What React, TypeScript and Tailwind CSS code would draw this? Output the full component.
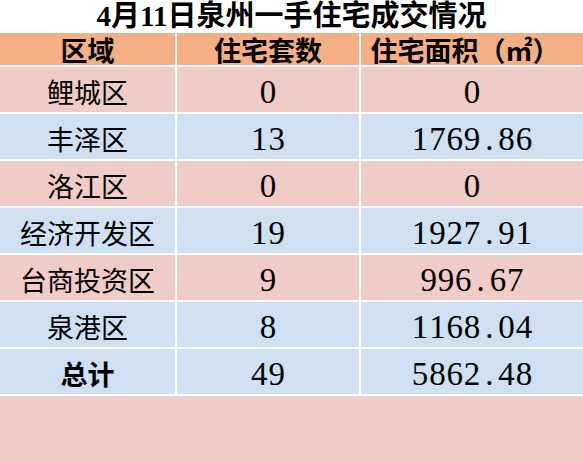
import React from 'react'

const rows = [
  { name: '鲤城区', count: '0', area: '0', bg: 'bg-[#f0ccc8]' },
  { name: '丰泽区', count: '13', area: '1769.86', bg: 'bg-[#cee0f2]' },
  { name: '洛江区', count: '0', area: '0', bg: 'bg-[#f0ccc8]' },
  { name: '经济开发区', count: '19', area: '1927.91', bg: 'bg-[#cee0f2]' },
  { name: '台商投资区', count: '9', area: '996.67', bg: 'bg-[#f0ccc8]' },
  { name: '泉港区', count: '8', area: '1168.04', bg: 'bg-[#cee0f2]' },
  { name: '总计', count: '49', area: '5862.48', bg: 'bg-[#cee0f2]', bold: true },
]

// digits drawn in fixed cells, like the half-width glyphs of the sheet
const Num = ({ v }: { v: string }) => (
  <span className="inline-flex">
    {v.split('').map((c, i) => (
      <span key={i} className="w-[17.3px] text-center">
        {c}
      </span>
    ))}
  </span>
)

const App = () => {
  return (
    <div className="w-[583px] h-[462px] bg-white overflow-hidden text-black font-[family-name:'Liberation_Serif','Noto_Sans_CJK_SC',serif]">
      <div className="h-[33px] flex items-center justify-center text-[29px] font-bold leading-none">
        4月11日泉州一手住宅成交情况
      </div>
      <div className="grid grid-cols-[175px_182px_1fr] gap-[2px] bg-white font-[family-name:'Noto_Sans_CJK_SC',sans-serif]">
        <div className="h-[32px] bg-[#f4b083] flex items-center justify-center text-[27px] font-bold leading-none">
          区域
        </div>
        <div className="h-[32px] bg-[#f4b083] flex items-center justify-center text-[27px] font-bold leading-none">
          住宅套数
        </div>
        <div className="h-[32px] bg-[#f4b083] flex items-center justify-center text-[27px] font-bold leading-none pr-[14px]">
          住宅面积（㎡）
        </div>
        {rows.map((r, idx) => (
          <React.Fragment key={idx}>
            <div
              className={`h-[45px] ${r.bg} flex items-center justify-center pt-[3px] text-[27px] leading-none ${r.bold ? 'font-bold' : 'font-normal'}`}
            >
              {r.name}
            </div>
            <div className={`h-[45px] ${r.bg} flex items-center justify-center pt-[5px] text-[33px] leading-none font-[family-name:'Liberation_Serif',serif]`}>
              <Num v={r.count} />
            </div>
            <div className={`h-[45px] ${r.bg} flex items-center justify-center pt-[5px] text-[33px] leading-none font-[family-name:'Liberation_Serif',serif]`}>
              <Num v={r.area} />
            </div>
          </React.Fragment>
        ))}
      </div>
      <div className="mt-[2px] h-[66px] bg-[#f0ccc8]" />
    </div>
  )
}

export default App
